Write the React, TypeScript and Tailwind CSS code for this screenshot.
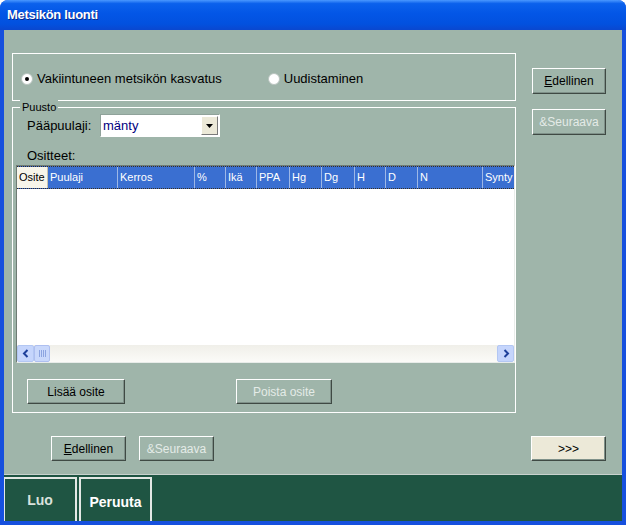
import React from "react";

const btnBase =
  "flex items-center justify-center text-[12px] border border-t-white border-l-white border-r-[#3f4a44] border-b-[#3f4a44] shadow-[inset_-1px_-1px_0_#7f9189]";

function Radio({ checked }: { checked?: boolean }) {
  return (
    <span className="w-[12px] h-[12px] rounded-full bg-white border border-[#b9c4bf] flex items-center justify-center shrink-0">
      {checked && <span className="w-[4px] h-[4px] rounded-full bg-black" />}
    </span>
  );
}

function Chevron({ dir }: { dir: "left" | "right" }) {
  return (
    <svg width="8" height="9" viewBox="0 0 8 9">
      {dir === "left" ? (
        <path d="M5.5 1 L2 4.5 L5.5 8" stroke="#1d3f9a" strokeWidth="2" fill="none" />
      ) : (
        <path d="M2.5 1 L6 4.5 L2.5 8" stroke="#1d3f9a" strokeWidth="2" fill="none" />
      )}
    </svg>
  );
}

const cols: { label: string; w: string }[] = [
  { label: "Puulaji", w: "w-[70px]" },
  { label: "Kerros", w: "w-[77px]" },
  { label: "%", w: "w-[31px]" },
  { label: "Ikä", w: "w-[31px]" },
  { label: "PPA", w: "w-[33px]" },
  { label: "Hg", w: "w-[32px]" },
  { label: "Dg", w: "w-[33px]" },
  { label: "H", w: "w-[31px]" },
  { label: "D", w: "w-[32px]" },
  { label: "N", w: "w-[65px]" },
  { label: "Synty", w: "w-[32px]" },
];

export default function App() {
  return (
    <div className="w-[626px] h-[525px] bg-[#1650de] rounded-t-[8px] flex flex-col overflow-hidden font-['Liberation_Sans',Arial,sans-serif]">
      {/* Title bar */}
      <div className="h-[30px] shrink-0 flex items-center pl-[7px] bg-[linear-gradient(to_bottom,#4a98ff_0%,#0b61ec_12%,#0356e6_45%,#0251df_80%,#0a47cf_100%)]">
        <span className="text-white text-[13px] font-bold tracking-[-0.3px] [text-shadow:1px_1px_0_#0a2a8a]">
          Metsikön luonti
        </span>
      </div>

      <div className="flex-1 mx-[4px] mb-[4px] flex flex-col bg-[#9fb5aa]">
        {/* Body */}
        <div className="h-[444px] flex flex-col pt-[23px] pl-[8px]">
          <div className="flex">
            {/* Left column */}
            <div className="w-[504px] flex flex-col">
              {/* Group 1 */}
              <div className="h-[48px] border border-white flex items-center pt-[4px] pl-[8px] text-[13px] text-black">
                <Radio checked />
                <span className="ml-[4px]">Vakiintuneen metsikön kasvatus</span>
                <span className="ml-[46px]"><Radio /></span>
                <span className="ml-[4px]">Uudistaminen</span>
              </div>

              {/* Group 2 */}
              <div className="mt-[6px] h-[306px] relative border border-white flex flex-col">
                <span className="absolute top-[-8px] left-[7px] px-[2px] bg-[#9fb5aa] text-[11px] leading-[14px] text-black">
                  Puusto
                </span>
                <div className="mt-[6px] pl-[14px] flex items-center h-[23px]">
                  <span className="text-[13px] text-black w-[73px]">Pääpuulaji:</span>
                  <div className="w-[120px] h-[23px] bg-white border border-t-[#8fa29a] border-l-[#8fa29a] border-r-white border-b-white flex items-center">
                    <span className="flex-1 pl-[2px] text-[13px] text-[#000080]">mänty</span>
                    <div className="w-[17px] h-[19px] mr-[1px] bg-[#ece9d8] border border-t-white border-l-white border-r-[#7a7a7a] border-b-[#7a7a7a] flex items-center justify-center">
                      <svg width="7" height="4" viewBox="0 0 7 4">
                        <path d="M0 0 H7 L3.5 4 Z" fill="#000" />
                      </svg>
                    </div>
                  </div>
                </div>
                <div className="mt-[11px] pl-[14px] text-[13px] leading-[15px] text-black">Ositteet:</div>
                {/* Table */}
                <div className="mt-[2px] ml-[3px] w-[499px] h-[198px] bg-white border border-t-[#6f7c75] border-l-[#6f7c75] border-r-[#e8ece9] border-b-[#e8ece9] flex flex-col overflow-hidden">
                  <div className="h-[23px] flex border-y border-dotted border-[#3a2f1e] bg-[#3a6fd1] overflow-hidden">
                    <div className="w-[31px] shrink-0 bg-[#f7f5ea] text-black text-[11px] flex items-center pl-[2px] border-r border-[#c9c3ad]">
                      Osite
                    </div>
                    {cols.map((c) => (
                      <div
                        key={c.label}
                        className={`${c.w} shrink-0 text-white text-[11px] flex items-center pl-[2px] border-r border-[#9db7e6] whitespace-nowrap overflow-hidden`}
                      >
                        {c.label}
                      </div>
                    ))}
                  </div>
                  <div className="flex-1" />
                  {/* Scrollbar */}
                  <div className="h-[17px] flex items-center bg-[linear-gradient(to_bottom,#f0efe9,#fbfbf8)]">
                    <div className="w-[17px] h-[17px] bg-[#c5d5fc] border border-[#b3c7f3] rounded-[2px] flex items-center justify-center">
                      <Chevron dir="left" />
                    </div>
                    <div className="w-[16px] h-[17px] bg-[#c9d8fb] border border-[#aebff0] rounded-[2px] flex items-center justify-center gap-[1px]">
                      <span className="w-[1px] h-[7px] bg-[#8ca4e0]" />
                      <span className="w-[1px] h-[7px] bg-[#8ca4e0]" />
                      <span className="w-[1px] h-[7px] bg-[#8ca4e0]" />
                      <span className="w-[1px] h-[7px] bg-[#8ca4e0]" />
                    </div>
                    <div className="flex-1" />
                    <div className="w-[17px] h-[17px] bg-[#c5d5fc] border border-[#b3c7f3] rounded-[2px] flex items-center justify-center">
                      <Chevron dir="right" />
                    </div>
                  </div>
                </div>
                {/* Buttons */}
                <div className="mt-[16px] pl-[14px] flex">
                  <div className={`${btnBase} w-[98px] h-[25px] text-black`}>Lisää osite</div>
                  <div className={`${btnBase} ml-[111px] w-[96px] h-[25px] text-[#e4ebe7]`}>Poista osite</div>
                </div>
              </div>
            </div>

            {/* Right column */}
            <div className="ml-[16px] pt-[15px] flex flex-col gap-[15px]">
              <div className={`${btnBase} w-[74px] h-[26px] text-black`}>
                <span><span className="underline">E</span>dellinen</span>
              </div>
              <div className={`${btnBase} w-[74px] h-[26px] text-[#e4ebe7]`}>&amp;Seuraava</div>
            </div>
          </div>

          {/* Bottom buttons */}
          <div className="mt-[23px] flex">
            <div className={`${btnBase} ml-[39px] w-[75px] h-[25px] text-black`}>
              <span><span className="underline">E</span>dellinen</span>
            </div>
            <div className={`${btnBase} ml-[13px] w-[75px] h-[25px] text-[#e4ebe7]`}>&amp;Seuraava</div>
            <div className={`${btnBase} ml-[317px] w-[75px] h-[25px] bg-[#ece9d8] text-black`}>&gt;&gt;&gt;</div>
          </div>
        </div>

        {/* Bottom bar */}
        <div className="flex-1 bg-[#1f5543] border-t border-[#c9d2ce] flex pt-[2px]">
          <div className="w-[73px] border-t-2 border-l border-r-2 border-[#e3e8e5] flex items-center justify-center">
            <span className="text-[14px] font-bold text-[#d9e2dd]">Luo</span>
          </div>
          <div className="ml-[2px] w-[73px] border-t-2 border-l-2 border-r-2 border-[#e3e8e5] flex items-center justify-center pt-[4px]">
            <span className="text-[14px] font-bold text-white">Peruuta</span>
          </div>
        </div>
      </div>
    </div>
  );
}
